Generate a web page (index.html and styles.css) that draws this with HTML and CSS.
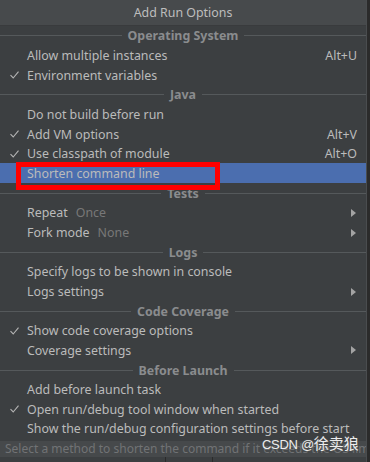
FILE: index.html
```html
<!DOCTYPE html>
<html>
	<head>
		<meta charset="UTF-8">
		<title>Add Run Options</title>
		<link rel="stylesheet" href="styles.css">
	</head>
	<body>
		<div class="screen">
			<div class="popup">
				<div class="title">Add Run Options</div>
				<div class="list">
					<div class="sep"><span>Operating System</span></div>
					<div class="item"><i class="chk"></i><span class="name">Allow multiple instances</span><span class="key">Alt+U</span></div>
					<div class="item"><i class="chk on"><svg width="9" height="8" viewBox="0 0 9 8"><path d="M0.5 4.2 L3.2 7 L8.5 0.6" fill="none" stroke="#b4b4b4" stroke-width="1.1"/></svg></i><span class="name">Environment variables</span></div>
					<div class="sep"><span>Java</span></div>
					<div class="item"><i class="chk"></i><span class="name">Do not build before run</span></div>
					<div class="item"><i class="chk on"><svg width="9" height="8" viewBox="0 0 9 8"><path d="M0.5 4.2 L3.2 7 L8.5 0.6" fill="none" stroke="#b4b4b4" stroke-width="1.1"/></svg></i><span class="name">Add VM options</span><span class="key">Alt+V</span></div>
					<div class="item"><i class="chk on"><svg width="9" height="8" viewBox="0 0 9 8"><path d="M0.5 4.2 L3.2 7 L8.5 0.6" fill="none" stroke="#b4b4b4" stroke-width="1.1"/></svg></i><span class="name">Use classpath of module</span><span class="key">Alt+O</span></div>
					<div class="item selected"><i class="chk"></i><span class="name">Shorten command line</span><span class="mark"></span></div>
					<div class="sep"><span>Tests</span></div>
					<div class="item"><i class="chk"></i><span class="name">Repeat</span><span class="value">Once</span><i class="arrow"></i></div>
					<div class="item"><i class="chk"></i><span class="name">Fork mode</span><span class="value">None</span><i class="arrow"></i></div>
					<div class="sep"><span>Logs</span></div>
					<div class="item"><i class="chk"></i><span class="name">Specify logs to be shown in console</span></div>
					<div class="item"><i class="chk"></i><span class="name">Logs settings</span><i class="arrow"></i></div>
					<div class="sep"><span>Code Coverage</span></div>
					<div class="item"><i class="chk on"><svg width="9" height="8" viewBox="0 0 9 8"><path d="M0.5 4.2 L3.2 7 L8.5 0.6" fill="none" stroke="#b4b4b4" stroke-width="1.1"/></svg></i><span class="name">Show code coverage options</span></div>
					<div class="item"><i class="chk"></i><span class="name">Coverage settings</span><i class="arrow"></i></div>
					<div class="sep"><span>Before Launch</span></div>
					<div class="item"><i class="chk"></i><span class="name">Add before launch task</span></div>
					<div class="item"><i class="chk on"><svg width="9" height="8" viewBox="0 0 9 8"><path d="M0.5 4.2 L3.2 7 L8.5 0.6" fill="none" stroke="#b4b4b4" stroke-width="1.1"/></svg></i><span class="name">Open run/debug tool window when started</span></div>
					<div class="item"><i class="chk"></i><span class="name">Show the run/debug configuration settings before start</span></div>
				</div>
				<div class="status">Select a method to shorten the command if it exceeds the OS limit</div>
				<div class="under"><span></span><span></span></div>
				<div class="watermark"><span class="latin">CSDN @</span>徐卖狼</div>
			</div>
			<div class="edge"></div>
		</div>
	</body>
</html>
```
FILE: styles.css
```css
*{
	margin: 0;
	padding: 0;
	box-sizing: border-box;
}
body{
	width: 370px;
	height: 462px;
	overflow: hidden;
	background: #2b2b2b;
	font: 12.4px "Noto Sans", "Noto Sans CJK SC", sans-serif;
	color: #bbbbbb;
}
.screen{
	display: flex;
	height: 462px;
}
.popup{
	position: relative;
	width: 366px;
	display: flex;
	flex-direction: column;
	background: #3c3f41;
}
.title{
	height: 26px;
	line-height: 25px;
	text-align: center;
	background: #474a4c;
	border-bottom: 1px solid #393b3d;
	color: #bdbdbd;
}
.list{
	height: 415px;
	display: flex;
	flex-direction: column;
}
.item, .sep{
	height: 19.65px;
	flex: none;
	display: flex;
	align-items: center;
	white-space: nowrap;
}
.sep{
	gap: 6px;
	color: #8a8c8e;
	font-weight: bold;
	justify-content: center;
}
.sep::before, .sep::after{
	content: "";
	flex: 1;
	height: 1px;
	background: #55595b;
}
.chk{
	width: 27px;
	flex: none;
	padding-left: 10px;
	display: flex;
	align-items: center;
}
.name{
	color: #bbbbbb;
}
.value{
	margin-left: 8px;
	color: #787878;
}
.key{
	margin-left: auto;
	padding-right: 9px;
	color: #bbbbbb;
}
.arrow{
	margin-left: auto;
	margin-right: 10px;
	width: 0;
	height: 0;
	border-left: 5px solid #a3a3a3;
	border-top: 4px solid transparent;
	border-bottom: 4px solid transparent;
}
.item.selected{
	position: relative;
	background: #4b6eaf;
	height: 20px;
}
.item.selected .mark{
	position: absolute;
	left: 16px;
	top: -1px;
	width: 204px;
	height: 28px;
	border: 5px solid #ff0000;
}
.status{
	height: 16px;
	line-height: 15px;
	padding-left: 5px;
	background: #46494b;
	color: #717375;
	font-size: 12px;
	white-space: nowrap;
	overflow: hidden;
}
.under{
	flex: 1;
	display: flex;
	background: #3c3f41;
}
.under span{
	border-right: 1px solid #2b2b2b;
	width: 166px;
}
.under span + span{
	width: 47px;
}
.watermark{
	position: absolute;
	left: 262px;
	top: 432px;
	font-size: 15px;
	color: #ffffff;
	opacity: 0.9;
	text-shadow: 0 0 2px #555;
	white-space: nowrap;
}
.watermark .latin{
	font: 13px "Liberation Sans", sans-serif;
	letter-spacing: -0.3px;
}
.edge{
	flex: 1;
	background: #2b2b2b;
	border-left: 1px solid #4a4d4f;
}
```
